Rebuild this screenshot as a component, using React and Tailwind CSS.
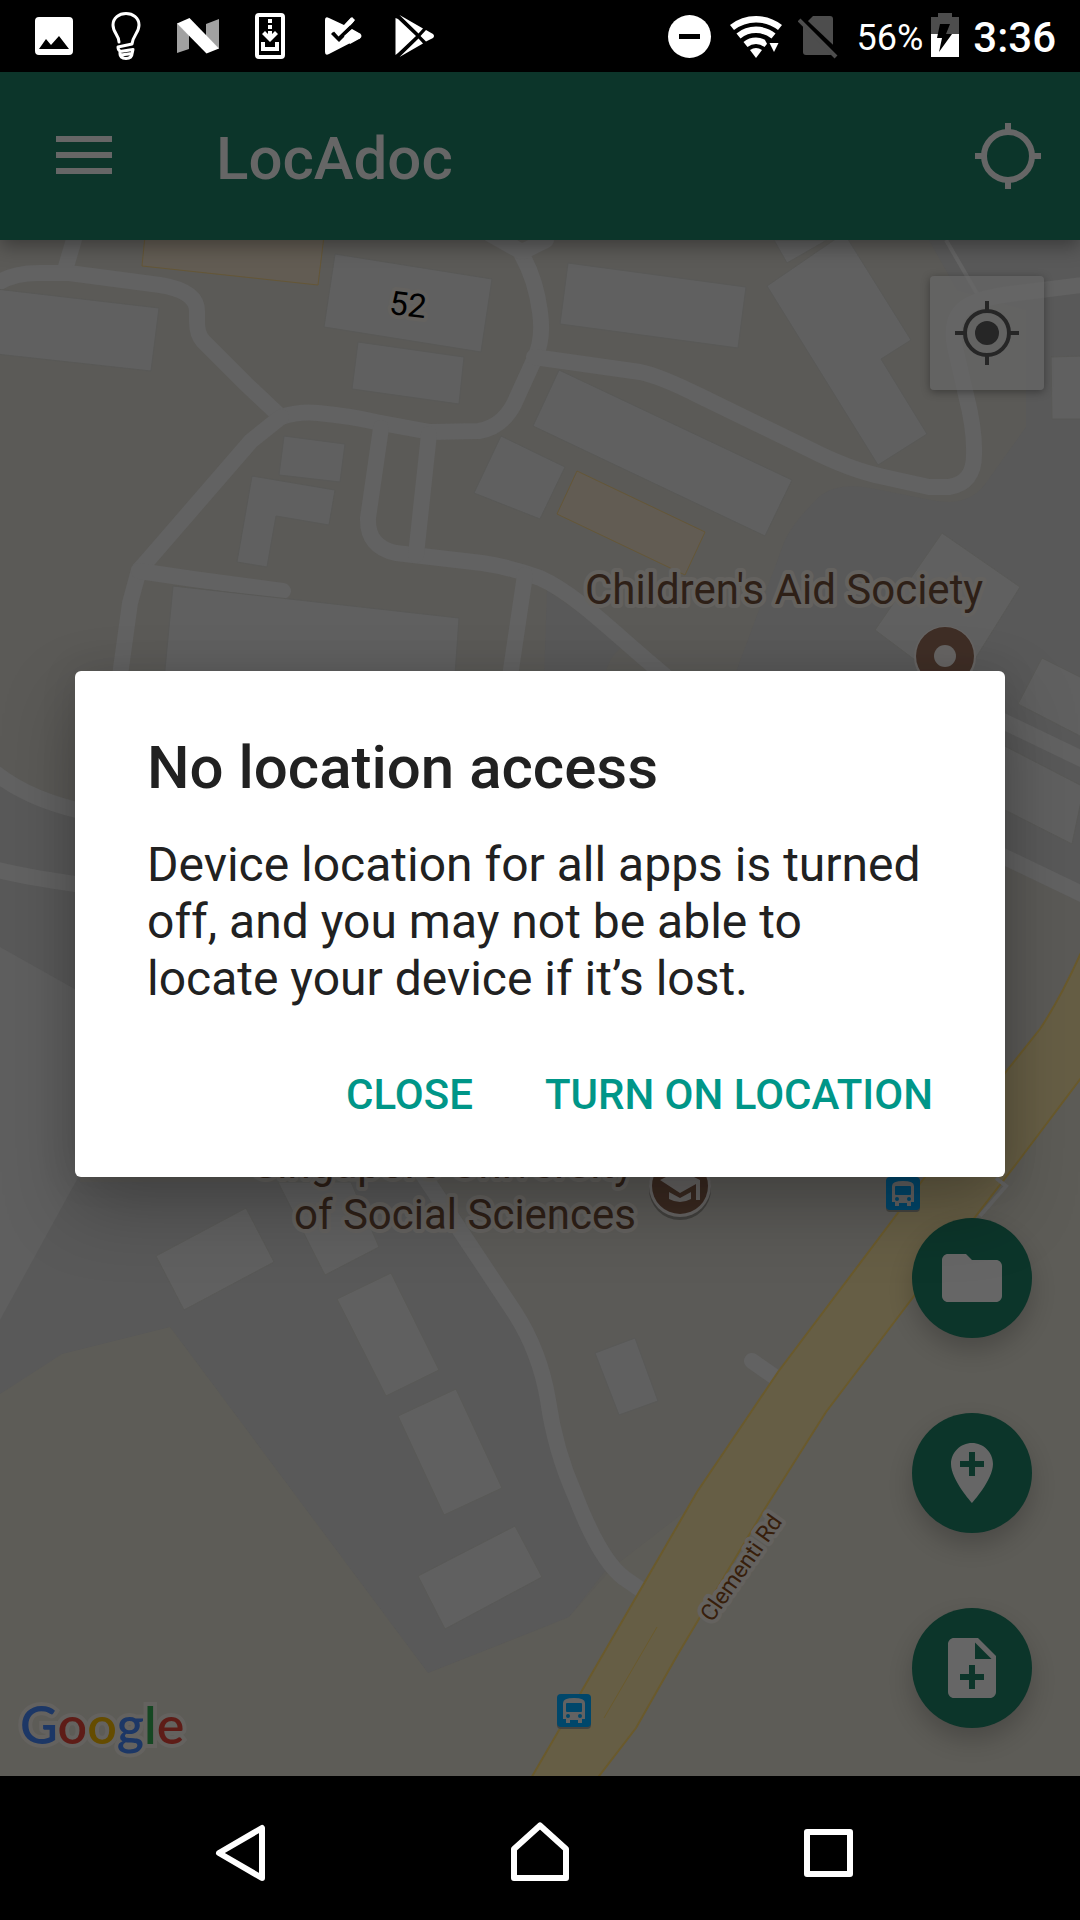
import React from "react";

const ROADS = [
  "M75 236L65 270",
  "M-6 285C10 275 24 273 40 273H69L160 285Q197 291 197 311V322Q197 334 203 341L246 384L281 417",
  "M281 417Q300 411 318 413Q350 416 376 422L430 432L479 431Q502 427 514 404L534 360Q544 340 540 312Q536 280 522 255",
  "M546 240L522 252L490 234",
  "M281 417L251 441L148 560L139 570L130 603L118 690",
  "M139 571L193 579L283 591",
  "M381 428L368 518Q367 547 396 553L482 563Q510 567 540 578C580 596 620 640 680 688",
  "M429 434L416 555",
  "M525 575L508 690",
  "M534 357L640 372Q660 376 700 396L809 449Q850 470 884 477L929 487H949Q974 483 974 455Q975 430 966 395L955 347Q949 316 969 305Q985 297 1010 294L1090 284",
  "M-6 772Q30 801 90 813",
  "M-6 869Q30 878 90 886",
  "M990 715L1090 763",
  "M990 850L1090 898",
  "M420 1170L515 1313Q540 1352 548 1400Q555 1450 575 1495Q600 1560 624 1578L640 1589",
  "M752 1361L782 1382",
];

const BUILDINGS = [
  "-4,289 159,308 151,371 -4,354",
  "335,254 492,279 481,352 324,327",
  "358,342 464,357 459,404 352,389",
  "284,436 345,444 340,482 279,475",
  "252,476 335,490 329,525 276,516 267,567 237,562",
  "173,586 459,618 454,690 163,690",
  "501,436 565,467 540,519 474,493",
  "559,370 792,480 765,536 533,426",
  "568,263 746,287 738,348 560,324",
  "767,286 840,236 846,236 911,340 881,359 927,434 878,465",
  "774,240 827,240 787,263",
  "942,533 1020,587 965,675 935,675 875,630",
  "1051,357 1084,356 1084,419 1052,419",
  "1042,658 1084,679 1084,738 1018,704",
  "995,741 1084,787 1072,844 995,805",
  "156,1256 246,1208 274,1262 184,1310",
  "278,1182 351,1182 379,1247 325,1275",
  "337,1299 391,1273 439,1370 386,1396",
  "398,1416 456,1389 502,1488 444,1515",
  "418,1576 515,1526 542,1577 445,1629",
  "595,1353 635,1338 658,1401 619,1415",
];

function BusStop({ x, y }) {
  return (
    <g transform={`translate(${x} ${y})`}>
      <rect y="2" width="34" height="33" rx="4" fill="#454440" />
      <rect width="34" height="33" rx="4" fill="#00476b" />
      <path d="M6 25V9Q6 4 17 4Q28 4 28 9V25H25V29H21V26H13V29H9V25Z" fill="#626262" />
      <rect x="9" y="9" width="16" height="9" rx="1" fill="#00476b" />
      <circle cx="11" cy="22" r="2" fill="#00476b" />
      <circle cx="23" cy="22" r="2" fill="#00476b" />
    </g>
  );
}

function MapCanvas() {
  return (
    <svg
      className="absolute inset-0 h-full w-full font-['Roboto',sans-serif]"
      viewBox="0 240 1080 1536"
      preserveAspectRatio="xMidYMid slice"
      role="img"
      aria-label="Map"
    >
      <rect y="240" width="1080" height="1536" fill="#5b5a57" />
      <path d="M929 240L957 290L1026 310V427L988 480Q975 501 950 502L936 501L870 488Q835 482 818 498Q795 520 785 540L733 680V1000H1005V857L1080 893V240Z" fill="#595959" />
      <path d="M547 590L625 645Q608 655 604 680H544Z" fill="#595959" />
      <path d="M0 776Q40 804 80 811V1182H427L517 1318Q540 1352 548 1400Q555 1450 575 1495Q600 1560 624 1578L605 1571L569 1617L428 1673L170 1327L0 1394Z" fill="#595959" />
      <path d="M0 947L80 992V1174L0 1320Z" fill="#5f5f5f" />
      <path d="M0 1394L62 1354L170 1327L428 1673L540 1629L569 1617L612 1568L700 1500L1080 1000V1776H0Z" fill="#5d5c57" />
      <path d="M946 240L979 297" stroke="#646464" strokeWidth="4" />
      <g fill="none" stroke="#626262" strokeWidth="16" strokeLinecap="round" strokeLinejoin="round">
        {ROADS.map((d) => (
          <path key={d} d={d} />
        ))}
      </g>
      <g fill="#606060" stroke="#595957" strokeWidth="1">
        {BUILDINGS.map((p) => (
          <polygon key={p} points={p} />
        ))}
      </g>
      <g fill="#625c53" stroke="#655737" strokeWidth="1">
        <polygon points="145,236 324,236 318,285 142,266" />
        <polygon points="577,471 705,532 685,575 557,514" />
      </g>
      <path
        d="M1084 946Q1062 996 1040 1029L1005 1073L925 1177L778 1372L697 1492L580 1694L530 1780H596L636 1728L678 1654L764 1510L826 1412L914 1296L1020 1159L1084 1074Z"
        fill="#665e45"
        stroke="#6a5a2c"
        strokeWidth="2"
      />
      <path d="M657 1627L604 1718" stroke="#6a5a2c" strokeWidth="1" />
      <path d="M996 1178L1006 1186L980 1216" fill="none" stroke="#646464" strokeWidth="4" />
      <BusStop x={886} y={1177} />
      <BusStop x={557} y={1694} />
      <circle cx="945" cy="657" r="31" fill="#666463" />
      <circle cx="945" cy="656" r="29" fill="#3f2e26" />
      <circle cx="945" cy="656" r="11" fill="#666463" />
      <circle cx="680" cy="1189" r="31" fill="#42413e" />
      <circle cx="680" cy="1186" r="31" fill="#666463" />
      <circle cx="680" cy="1186" r="28" fill="#3a2920" />
      <path d="M660 1180L680 1170L700 1180V1200H696V1184L680 1193Z" fill="#666463" />
      <path d="M669 1192L680 1198L691 1192V1199Q680 1205 669 1199Z" fill="#666463" />
      <g
        fill="#2e2017"
        stroke="#64625f"
        strokeWidth="8"
        strokeLinejoin="round"
        fontSize="42"
        style={{ paintOrder: "stroke" }}
      >
        <text x="585" y="604">Children's Aid Society</text>
        <text x="634" y="1178" textAnchor="end">Singapore University</text>
        <text x="636" y="1229" textAnchor="end">of Social Sciences</text>
        <text x="408" y="316" textAnchor="middle" fontSize="33" fill="#000" transform="rotate(7 408 304)">52</text>
        <text x="712" y="1623" fontSize="23" fill="#371e0b" transform="rotate(-55 712 1623)">Clementi Rd</text>
      </g>
    </svg>
  );
}

function StatusBar() {
  return (
    <div className="flex h-[72px] shrink-0 items-center justify-between bg-black pr-6 pl-[18px] text-white">
      <div className="flex" aria-hidden="true">
        <svg className="size-[72px]" viewBox="0 0 72 72" fill="#fff">
          <path fillRule="evenodd" d="M21 17H51Q55 17 55 21V51Q55 55 51 55H21Q17 55 17 51V21Q17 17 21 17ZM21 49H51L41 36L33 45L28 39Z" />
        </svg>
        <svg className="size-[72px]" viewBox="0 0 72 72" fill="none" stroke="#fff" strokeWidth="3" strokeLinecap="round" strokeLinejoin="round">
          <path d="M29 42C29 35 23 33 23 25C23 18 29 13.500 36 13.500C43 13.500 49 18 49 25C49 33 43 35 42 44L28 47Q28 50 30 51V54Q30 58 36 58.500Q42 58 42 54L43 49.500L30 51.500M31 55L42 53.500" />
        </svg>
        <svg className="size-[72px]" viewBox="0 0 72 72">
          <path d="M15 23L27 35V49L15 53ZM44 24L57 19V49L44 36Z" fill="#a1a1a1" />
          <path d="M15 23.500L27.500 18L57 48.500L44.500 53.500Z" fill="#fff" />
        </svg>
        <svg className="size-[72px]" viewBox="0 0 72 72">
          <rect x="23" y="15" width="26" height="42" rx="2" fill="none" stroke="#fff" strokeWidth="4" />
          <path d="M34 19H38V23H34ZM34 25H38V29H34ZM34 31H38V34L41 31L44 34L36 42L28 34L31 31L34 34Z" fill="#fff" />
          <path d="M29 42V49H43V42" fill="none" stroke="#fff" strokeWidth="4" />
        </svg>
        <svg className="size-[72px]" viewBox="0 0 72 72">
          <path d="M19 20Q19 16 23 18L38 25L45 17.500L48.500 20L45 29L54 34Q56 36 54 38L23 54Q19 56 19 52Z" fill="#fff" />
          <path d="M27 32L32.500 38L48 21.500L56 22L54 30L47 28L33 42L25 34Z" fill="#000" />
          <path d="M46 29L54 33.500Q57 36 54 38.500L44 44L38 36Z" fill="#fff" />
          <path d="M28 31.500L32.500 36.500L49 20L46 17L32 32Z" fill="#fff" />
          <path d="M26 34L32.500 41L46 27.500L44 25.500L32.500 36.500L28 31.500Z" fill="#000" />
        </svg>
        <svg className="size-[72px]" viewBox="0 0 72 72" fill="#fff">
          <path d="M17.500 18L20 19L38 36L20 53L17.500 55ZM21.500 15L45 28.500L40.500 33.500ZM21.500 57L45 43.500L40.500 38.500ZM48 30L55 34Q57 36 55 38L48 41.500L42.500 36Z" />
        </svg>
      </div>
      <div className="flex items-center">
        <svg className="mr-[18px] h-[72px] w-11" viewBox="669 0 44 72" aria-label="Do not disturb">
          <circle cx="690.500" cy="36.500" r="21.500" fill="#fff" />
          <rect x="680" y="34" width="21" height="5" fill="#000" />
        </svg>
        <svg className="mr-4 h-[72px] w-[52px]" viewBox="731 0 52 72" aria-label="Wi-Fi">
          <g fill="none" stroke="#fff" strokeWidth="6.500">
            <path d="M733 27.500A39 39 0 0 1 781 27.500" />
            <path d="M739.500 36A28 28 0 0 1 774.500 36" />
            <path d="M746.500 44.500A17 17 0 0 1 767.500 44.500" />
          </g>
          <path d="M757 58L751 50Q757 46 763 50Z" fill="#fff" />
          <path d="M766 40H785L775 57Z" fill="#000" />
          <path d="M770.500 43H779.500L775 52Z" fill="#fff" />
        </svg>
        <svg className="mr-[18px] h-[72px] w-10" viewBox="800 0 40 72" aria-label="No SIM card">
          <path d="M815 16H832Q835 16 835 19V52Q835 55 832 55H808Q805 55 805 52V26Z" fill="#4d4d4d" />
          <path d="M801 16L840 53" stroke="#000" strokeWidth="5" />
          <path d="M801 20L838 57" stroke="#4d4d4d" strokeWidth="4" />
        </svg>
        <span className="mr-2 pt-1 text-[36px] leading-[46px]">56%</span>
        <svg className="mr-[14px] h-[72px] w-7" viewBox="932 0 28 72" aria-label="Battery charging">
          <path d="M939 13H953V17H960V34H932V17H939Z" fill="#4d4d4d" />
          <path d="M932 34H960V57H932Z" fill="#fff" />
          <path d="M941 24H951L947 34H953L940 52L943 38H938Z" fill="#000" />
        </svg>
        <time className="pt-1 text-[42px] leading-[50px] font-medium">3:36</time>
      </div>
    </div>
  );
}

function Fab({ label, children }) {
  return (
    <button
      type="button"
      aria-label={label}
      className="flex size-[120px] items-center justify-center rounded-full bg-[#0c352a] shadow-[0_12px_24px_rgba(0,0,0,0.2)]"
    >
      <svg className="size-[72px]" viewBox="0 0 24 24" fill="#666" aria-hidden="true">
        {children}
      </svg>
    </button>
  );
}

function NavButton({ label, children }) {
  return (
    <button type="button" aria-label={label} className="flex w-72 items-center justify-center">
      <svg className="h-36 w-24" viewBox="0 0 96 144" fill="none" stroke="#fff" strokeWidth="6" strokeLinejoin="round" aria-hidden="true">
        {children}
      </svg>
    </button>
  );
}

export default function App() {
  return (
    <div className="flex min-h-screen flex-col bg-black font-['Roboto',sans-serif]">
      <StatusBar />
      <div className="relative flex flex-1 flex-col">
        <header className="z-10 flex h-[168px] shrink-0 items-center bg-[#0c352a] pr-9 pl-12 shadow-[0_6px_18px_rgba(0,0,0,0.35)]">
          <button type="button" aria-label="Open menu" className="mr-24">
            <svg className="size-[72px]" viewBox="0 0 72 72" fill="#666" aria-hidden="true">
              <path d="M8 16H64V22H8ZM8 32H64V38H8ZM8 48H64V54H8Z" />
            </svg>
          </button>
          <h1 className="flex-1 pt-1.5 text-[60px] leading-[70px] font-medium text-[#666]">LocAdoc</h1>
          <button type="button" aria-label="Locate">
            <svg className="size-[72px]" viewBox="0 0 72 72" fill="none" stroke="#666" strokeWidth="6" aria-hidden="true">
              <circle cx="36" cy="36" r="24" />
              <path d="M36 3V10M36 62V69M3 36H10M62 36H69" />
            </svg>
          </button>
        </header>

        <main className="relative flex flex-1 flex-col overflow-hidden bg-[#5b5a57]">
          <MapCanvas />
          <div className="relative flex flex-1 flex-col justify-between pt-9">
            <button
              type="button"
              aria-label="My location"
              className="mr-9 flex size-[114px] items-center justify-center self-end rounded-[4px] bg-[#666666]/70 shadow-[0_2px_8px_rgba(0,0,0,0.35)]"
            >
              <svg className="size-[72px]" viewBox="0 0 72 72" fill="none" stroke="#262626" strokeWidth="4" aria-hidden="true">
                <circle cx="36" cy="36" r="22" />
                <circle cx="36" cy="36" r="12" fill="#262626" stroke="none" />
                <path d="M36 4V13M36 59V68M4 36H13M59 36H68" />
              </svg>
            </button>
            <div className="flex items-end justify-between pr-12 pb-12 pl-5">
              <a
                href="#google"
                aria-label="Google"
                className="-mb-7 font-['Lato',sans-serif] text-[52px] leading-[64px] font-semibold [paint-order:stroke] [-webkit-text-stroke:8px_#64625f]"
              >
                <span className="text-[#1c3766]">G</span>
                <span className="text-[#5e1c17]">o</span>
                <span className="text-[#654c00]">o</span>
                <span className="text-[#1c3766]">g</span>
                <span className="text-[#154722]">l</span>
                <span className="text-[#5e1c17]">e</span>
              </a>
              <div className="flex flex-col gap-[75px]">
                <Fab label="Open folder">
                  <path d="M10 4H4c-1.100 0-2 .9-2 2v12c0 1.100.9 2 2 2h16c1.100 0 2-.9 2-2V8c0-1.100-.9-2-2-2h-8z" />
                </Fab>
                <Fab label="Add place">
                  <path d="M12 2C8.140 2 5 5.140 5 9c0 5.250 7 13 7 13s7-7.750 7-13c0-3.860-3.140-7-7-7zm4 8h-3v3h-2v-3H8V8h3V5h2v3h3z" />
                </Fab>
                <Fab label="New note">
                  <path d="M14 2H6c-1.100 0-2 .9-2 2v16c0 1.100.9 2 2 2h12c1.100 0 2-.9 2-2V8zm2 14h-3v3h-2v-3H8v-2h3v-3h2v3h3zm-3-7V3.500L18.500 9z" />
                </Fab>
              </div>
            </div>
          </div>
        </main>

        <div className="absolute inset-0 z-20 flex items-center justify-center px-[75px]">
          <section
            role="dialog"
            aria-modal="true"
            aria-labelledby="dialog-title"
            className="w-full rounded-[6px] bg-white px-[72px] pt-[62px] pb-[57px] text-[#212121] shadow-[0_30px_72px_rgba(0,0,0,0.25),0_0_36px_rgba(0,0,0,0.1)]"
          >
            <h2 id="dialog-title" className="text-[60px] leading-[70px] font-medium">No location access</h2>
            <p className="mt-[33px] text-[48px] leading-[57px]">
              Device location for all apps is turned off, and you may not be able to locate your device if it’s lost.
            </p>
            <div className="mt-[63px] flex justify-end gap-[72px] text-[42px] leading-[50px] font-medium text-[#009688]">
              <button type="button">CLOSE</button>
              <button type="button">TURN ON LOCATION</button>
            </div>
          </section>
        </div>
      </div>

      <nav aria-label="System navigation" className="flex h-36 shrink-0 justify-center bg-black">
        <NavButton label="Back">
          <path d="M58 52V102L15 77Z" />
        </NavButton>
        <NavButton label="Home">
          <path d="M48 49.500L74 73V102H22V73Z" />
        </NavButton>
        <NavButton label="Recent apps">
          <rect x="27" y="56" width="43" height="42" />
        </NavButton>
      </nav>
    </div>
  );
}
